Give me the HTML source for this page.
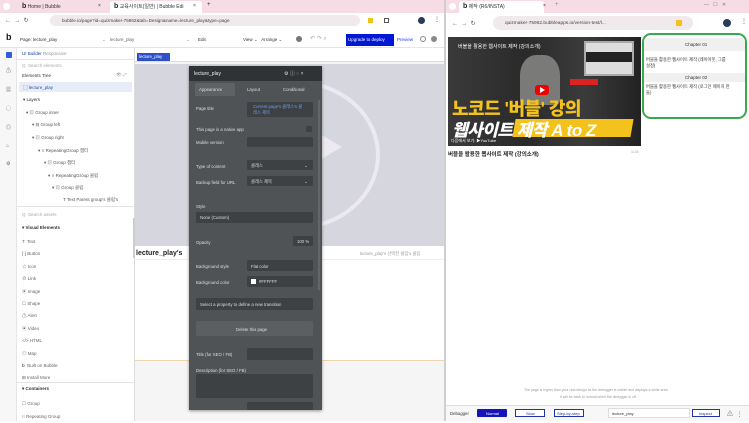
<!DOCTYPE html><html><head><meta charset="utf-8"><style>
*{box-sizing:border-box;margin:0;padding:0}
body{width:749px;height:421px;overflow:hidden;background:#fff;font-family:"Liberation Sans","Noto Sans CJK KR",sans-serif;font-size:4.5px;color:#333;position:relative}
.a{position:absolute}
.t{position:absolute;white-space:nowrap}
.tab{background:#f6dde5}
.pr{color:#ddd;font-size:4.3px}
.inp{position:absolute;background:#3e4144;border-radius:1px}
</style></head><body>
<!-- LEFT WINDOW -->
<div class="a tab" style="left:0;top:0;width:444px;height:13px"></div>
<div class="a" style="left:3px;top:3px;width:7px;height:7px;border-radius:50%;background:#fff"></div>
<div class="t" style="left:22px;top:3px;font-size:5px"><b style="font-size:7px;color:#222">b</b> Home | Bubble</div>
<div class="t" style="left:98px;top:3px;font-size:5px">×</div>
<div class="a" style="left:110px;top:1px;width:92px;height:12px;background:#fff;border-radius:3px 3px 0 0"></div>
<div class="t" style="left:114px;top:3px;font-size:5px"><b style="font-size:7px;color:#222">b</b> 교육사이트(일반) | Bubble Edi</div>
<div class="t" style="left:193px;top:3px;font-size:5px">×</div>
<div class="t" style="left:207px;top:2px;font-size:6px">+</div>
<div class="a" style="left:0;top:13px;width:444px;height:15px;background:#fff"></div>
<div class="t" style="left:5px;top:17px;font-size:6px;color:#555">←&nbsp;&nbsp;→&nbsp;&nbsp;↻</div>
<div class="a" style="left:50px;top:15px;width:310px;height:11px;background:#f1eaed;border-radius:6px"></div>
<div class="t" style="left:62px;top:18px;font-size:4.6px;color:#444">bubble.io/page?id=quizmaker-75962&amp;tab=Design&amp;name=lecture_play&amp;type=page</div>
<div class="a" style="left:368px;top:18px;width:5px;height:5px;background:#f2c21b"></div>
<div class="a" style="left:384px;top:18px;width:5px;height:5px;border:1px solid #555"></div>
<div class="a" style="left:418px;top:17px;width:7px;height:7px;border-radius:50%;background:#2b3b5a"></div>
<div class="t" style="left:434px;top:16px;font-size:6px">⋮</div>
<!-- bubble header -->
<div class="a" style="left:0;top:28px;width:444px;height:20px;background:#fff;border-bottom:1px solid #e4e4e4"></div>
<div class="t" style="left:6px;top:32px;font-size:9px;font-weight:bold;color:#111">b</div>
<div class="t" style="left:20px;top:37px">Page: lecture_play</div>
<div class="t" style="left:102px;top:37px;color:#888">⌄</div>
<div class="t" style="left:110px;top:37px;color:#666">lecture_play</div>
<div class="t" style="left:186px;top:37px;color:#888">⌄</div>
<div class="t" style="left:198px;top:37px">Edit</div>
<div class="t" style="left:243px;top:37px">View ⌄&nbsp;&nbsp; Arrange ⌄</div>
<div class="a" style="left:296px;top:36px;width:6px;height:6px;border-radius:50%;background:#777"></div>
<div class="t" style="left:310px;top:35px;font-size:6px;color:#aaa">↶ ↷ ⌕</div>
<div class="a" style="left:346px;top:34px;width:48px;height:12px;background:#0018d4"></div>
<div class="t" style="left:348px;top:37px;color:#fff">Upgrade to deploy</div>
<div class="t" style="left:397px;top:37px;color:#1a3ad4">Preview</div>
<div class="a" style="left:420px;top:36px;width:6px;height:6px;border-radius:50%;border:1px solid #888"></div>
<div class="a" style="left:431px;top:36px;width:6px;height:6px;border-radius:50%;background:#888"></div>
<!-- left rail -->
<div class="a" style="left:0;top:48px;width:17px;height:373px;background:#f7f7f7;border-right:1px solid #e5e5e5"></div>
<div class="a" style="left:6px;top:52px;width:6px;height:6px;background:#2d5fd8;border-radius:1px"></div>
<div class="t" style="left:6px;top:67px;font-size:5px;color:#666">⚠<br><br><br>▦<br><br><br>◯<br><br><br>◎<br><br><br>⌂<br><br><br>⚙</div>
<!-- left panel -->
<div class="a" style="left:17px;top:48px;width:118px;height:373px;background:#fff;border-right:1px solid #ddd"></div>
<div class="t" style="left:22px;top:51px;color:#2244aa">UI Builder <span style="color:#999">Responsive</span></div>
<div class="a" style="left:17px;top:59px;width:118px;height:1px;background:#e4e4e4"></div>
<div class="t" style="left:22px;top:63px;color:#aaa">Q&nbsp; Search elements</div>
<div class="t" style="left:22px;top:73px">Elements Tree</div>
<div class="t" style="left:116px;top:72px;color:#999">👁 ⤢</div>
<div class="a" style="left:19px;top:82px;width:113px;height:10px;background:#e6edf9"></div>
<div class="t" style="left:23px;top:85px;color:#2a4fae">▢ lecture_play</div>
<div class="t" style="left:23px;top:97px">▾ Layers</div>
<div class="t" style="left:26px;top:110px;color:#555">▾ ▥ Group inner</div>
<div class="t" style="left:32px;top:122px;color:#555">▾ ⊟ Group left</div>
<div class="t" style="left:32px;top:135px;color:#555">▾ ▥ Group right</div>
<div class="t" style="left:38px;top:148px;color:#555">▾ ⁝⁝ RepeatingGroup 챕터</div>
<div class="t" style="left:44px;top:160px;color:#555">▾ ▥ Group 챕터</div>
<div class="t" style="left:48px;top:173px;color:#555">▾ ⁝⁝ RepeatingGroup 클립</div>
<div class="t" style="left:52px;top:185px;color:#555">▾ ▥ Group 클립</div>
<div class="t" style="left:63px;top:197px;color:#555">T Text Parent group's 클립's</div>
<div class="a" style="left:17px;top:206px;width:118px;height:1px;background:#e4e4e4"></div>
<div class="t" style="left:22px;top:212px;color:#aaa">Q&nbsp; Search assets</div>
<div class="t" style="left:22px;top:225px;font-weight:bold">▾ Visual Elements</div>
<div class="t" style="left:22px;top:236px;color:#666;line-height:12.4px">T&nbsp; Text<br>[·] Button<br>☆ Icon<br>⊘ Link<br>▣ Image<br>☐ Shape<br>⚠ Alert<br>▣ Video<br>&lt;/&gt; HTML<br>◎ Map<br><b>b</b>&nbsp; Built on Bubble<br>⊞ Install More</div>
<div class="a" style="left:17px;top:382px;width:118px;height:1px;background:#e4e4e4"></div>
<div class="t" style="left:22px;top:386px;font-weight:bold">▾ Containers</div>
<div class="t" style="left:22px;top:398px;color:#666;line-height:12.5px">☐ Group<br>⁝⁝ Repeating Group</div>
<div class="a" style="left:133px;top:218px;width:2px;height:40px;background:#ccc"></div>
<!-- canvas -->
<div class="a" style="left:135px;top:48px;width:309px;height:373px;background:#f5f5f5"></div>
<div class="a" style="left:135px;top:48px;width:309px;height:14px;background:#fff;border-bottom:1px solid #f0d8b8"></div>
<div class="a" style="left:137px;top:53px;width:33px;height:8px;background:#2d4fc8"></div>
<div class="t" style="left:139px;top:54px;color:#fff;font-size:4.3px">lecture_play</div>
<div class="a" style="left:135px;top:64px;width:309px;height:182px;background:#d6d6de"></div>
<div class="a" style="left:210px;top:80px;width:170px;height:150px;border-radius:50%;border:4px solid #eceaf0"></div>
<div class="a" style="left:318px;top:133px;width:0;height:0;border-left:24px solid #eceaf0;border-top:14px solid transparent;border-bottom:14px solid transparent"></div>
<div class="a" style="left:135px;top:246px;width:309px;height:114px;background:#fff"></div>
<div class="t" style="left:136px;top:250px;font-size:7px;font-weight:bold;color:#222">lecture_play's</div>
<div class="t" style="left:360px;top:251px;color:#999;font-size:4.3px">lecture_play's 선택된 클립's 클립</div>
<div class="a" style="left:135px;top:259px;width:309px;height:1px;background:#eee"></div>
<div class="a" style="left:135px;top:360px;width:309px;height:1px;background:#f0d4b0"></div>
<!-- property panel -->
<div class="a" style="left:189px;top:66px;width:133px;height:344px;background:#505356;box-shadow:0 1px 3px rgba(0,0,0,.4)"></div>
<div class="a" style="left:189px;top:66px;width:133px;height:15px;background:#303336"></div>
<div class="t" style="left:194px;top:71px;color:#eee;font-size:5px">lecture_play</div>
<div class="t" style="left:284px;top:70px;color:#ddd;font-size:5px">⚙ ⓘ ◌ ×</div>
<div class="a" style="left:195px;top:83px;width:40px;height:13px;background:#5f6265;border-radius:2px 2px 0 0"></div>
<div class="t pr" style="left:199px;top:87px">Appearance</div>
<div class="t pr" style="left:247px;top:87px">Layout</div>
<div class="t pr" style="left:283px;top:87px">Conditional</div>
<div class="t pr" style="left:196px;top:106px">Page title</div>
<div class="inp" style="left:247px;top:102px;width:66px;height:15px"></div>
<div class="t" style="left:253px;top:104px;color:#6aa0ee;font-size:4.3px;line-height:6px">Current page's 클래스's 클<br>래스 제목</div>
<div class="t pr" style="left:196px;top:127px">This page is a native app</div>
<div class="inp" style="left:306px;top:126px;width:6px;height:6px"></div>
<div class="t pr" style="left:196px;top:140px">Mobile version</div>
<div class="inp" style="left:247px;top:137px;width:66px;height:10px"></div>
<div class="t pr" style="left:196px;top:164px">Type of content</div>
<div class="inp" style="left:247px;top:160px;width:66px;height:10px"></div>
<div class="t pr" style="left:251px;top:163px">클래스 <span style="margin-left:40px">⌄</span></div>
<div class="t pr" style="left:196px;top:180px">Backup field for URL</div>
<div class="inp" style="left:247px;top:176px;width:66px;height:10px"></div>
<div class="t pr" style="left:251px;top:179px">클래스 제목 <span style="margin-left:31px">⌄</span></div>
<div class="t pr" style="left:196px;top:204px">Style</div>
<div class="inp" style="left:196px;top:212px;width:117px;height:11px"></div>
<div class="t pr" style="left:200px;top:215px">None (Custom)</div>
<div class="t pr" style="left:196px;top:240px">Opacity</div>
<div class="inp" style="left:293px;top:236px;width:20px;height:10px"></div>
<div class="t pr" style="left:297px;top:239px">100 %</div>
<div class="t pr" style="left:196px;top:264px">Background style</div>
<div class="inp" style="left:247px;top:260px;width:66px;height:11px"></div>
<div class="t pr" style="left:251px;top:264px">Flat color</div>
<div class="t pr" style="left:196px;top:280px">Background color</div>
<div class="inp" style="left:247px;top:276px;width:66px;height:11px"></div>
<div class="a" style="left:251px;top:279px;width:5px;height:5px;background:#fff"></div>
<div class="t pr" style="left:259px;top:279px">#FFFFFF</div>
<div class="inp" style="left:196px;top:298px;width:117px;height:12px"></div>
<div class="t pr" style="left:200px;top:302px">Select a property to define a new transition</div>
<div class="a" style="left:196px;top:321px;width:117px;height:15px;background:#5c5f62;border-radius:2px"></div>
<div class="t pr" style="left:236px;top:327px">Delete this page</div>
<div class="t pr" style="left:196px;top:352px">Title (for SEO / FB)</div>
<div class="inp" style="left:247px;top:348px;width:66px;height:12px"></div>
<div class="t pr" style="left:196px;top:368px">Description (for SEO / FB)</div>
<div class="inp" style="left:196px;top:374px;width:117px;height:24px"></div>
<div class="inp" style="left:247px;top:402px;width:66px;height:8px"></div>
<div class="a" style="left:318px;top:100px;width:2px;height:190px;background:#666"></div>
<!-- divider -->
<div class="a" style="left:444px;top:0;width:2px;height:421px;background:#cfcfcf"></div>
<!-- RIGHT WINDOW -->
<div class="a tab" style="left:446px;top:0;width:303px;height:13px"></div>
<div class="a" style="left:449px;top:3px;width:7px;height:7px;border-radius:50%;background:#fff"></div>
<div class="a" style="left:459px;top:1px;width:85px;height:12px;background:#fff;border-radius:3px 3px 0 0"></div>
<div class="t" style="left:463px;top:3px;font-size:5px"><b style="font-size:7px;color:#222">b</b> 제작 (R6/INSTA)</div>
<div class="t" style="left:543px;top:3px;font-size:5px">×</div>
<div class="t" style="left:555px;top:2px;font-size:6px;color:#888">+</div>
<div class="t" style="left:704px;top:2px;font-size:5px;color:#777">—&nbsp;&nbsp;&nbsp;☐&nbsp;&nbsp;&nbsp;✕</div>
<div class="a" style="left:446px;top:13px;width:303px;height:20px;background:#fff"></div>
<div class="t" style="left:452px;top:20px;font-size:6px;color:#555">←&nbsp; →&nbsp; ↻</div>
<div class="a" style="left:493px;top:16px;width:200px;height:14px;background:#f1eaed;border-radius:7px"></div>
<div class="t" style="left:505px;top:21px;font-size:4.8px;color:#444">quizmaker-75962.bubbleapps.io/version-test/l...</div>
<div class="a" style="left:676px;top:20px;width:6px;height:6px;background:#f2c21b"></div>
<div class="a" style="left:723px;top:19px;width:8px;height:8px;border-radius:50%;background:#2b3b5a"></div>
<div class="t" style="left:741px;top:18px;font-size:6px">⋮</div>
<!-- video -->
<div class="a" style="left:448px;top:37px;width:193px;height:109px;background:linear-gradient(90deg,#3a3a3a,#2a2a2a 40%,#3b3b3b 70%,#222);overflow:hidden">
<div class="a" style="left:72px;top:18px;width:40px;height:50px;border-radius:40% 40% 10% 10%;background:#7a7a78"></div>
<div class="a" style="left:136px;top:4px;width:50px;height:35px;background:#ddd;border:2px solid #aaa"></div>
<div class="a" style="left:138px;top:15px;width:46px;height:10px;background:#222"></div>
<div class="t" style="left:10px;top:6px;color:#fff;font-size:5px">버블을 활용한 웹사이트 제작 (강의소개)</div>
<div class="a" style="left:87px;top:48px;width:14px;height:10px;background:#e00;border-radius:3px"></div>
<div class="a" style="left:92px;top:50px;border-left:5px solid #fff;border-top:3px solid transparent;border-bottom:3px solid transparent"></div>
<div class="a" style="left:122px;top:42px;width:28px;height:6px;background:#d22"></div>
<div class="a" style="left:66px;top:82px;width:118px;height:18px;background:#f4c21c;transform:skew(-10deg)"></div>
<div class="t" style="left:4px;top:58px;color:#f4c21c;font-size:18px;font-weight:900;letter-spacing:-.5px">노코드 '버블' 강의</div>
<div class="t" style="left:4px;top:79px;color:#fff;font-size:17px;font-weight:900;font-style:italic;letter-spacing:-.5px">웹사이트 제작 A to Z</div>
<div class="t" style="left:3px;top:101px;color:#fff;font-size:4px">다음에서 보기: ▶YouTube</div>
</div>
<div class="t" style="left:448px;top:150px;font-size:5.5px;font-weight:bold;color:#222">버블을 활용한 웹사이트 제작 (강의소개)</div>
<div class="t" style="left:631px;top:150px;font-size:3.5px;color:#aaa">1135</div>
<!-- chapters -->
<div class="a" style="left:642px;top:33px;width:105px;height:86px;border:2px solid #39a84e;border-radius:9px;background:#fff;overflow:hidden">
 <div class="a" style="left:0;top:3px;width:103px;height:13px;background:#f0f0f0"></div>
 <div class="t" style="left:41px;top:7px;font-size:4.5px;color:#333">Chapter 01</div>
 <div class="t" style="left:2px;top:22px;font-size:4.3px;line-height:6px;color:#333">버블을 활용한 웹사이트 제작 (레이아웃, 그룹<br>설정)</div>
 <div class="a" style="left:0;top:38px;width:103px;height:9px;background:#f0f0f0"></div>
 <div class="t" style="left:41px;top:40px;font-size:4.5px;color:#333">Chapter 02</div>
 <div class="t" style="left:2px;top:49px;font-size:4.3px;line-height:6px;color:#333">버블을 활용한 웹사이트 제작 (로그인 페이지 만<br>들)</div>
</div>
<!-- footer notes -->
<div class="t" style="left:524px;top:388px;font-size:3.5px;color:#999">The page is higher than your real design as the debugger is visible and displays a white area.</div>
<div class="t" style="left:560px;top:395px;font-size:3.5px;color:#999">It will be back to normal when the debugger is off.</div>
<!-- debugger -->
<div class="a" style="left:446px;top:405px;width:303px;height:16px;background:#f7f7f7;border-top:1px solid #ddd"></div>
<div class="t" style="left:450px;top:411px;font-size:4.3px">Debugger</div>
<div class="a" style="left:477px;top:409px;width:30px;height:8px;background:#1414b8;border-radius:1px"></div>
<div class="t" style="left:486px;top:411px;font-size:4px;color:#fff">Normal</div>
<div class="a" style="left:515px;top:409px;width:30px;height:8px;border:1px solid #2233aa;background:#fff"></div>
<div class="t" style="left:526px;top:411px;font-size:4px;color:#2233aa">Slow</div>
<div class="a" style="left:554px;top:409px;width:30px;height:8px;border:1px solid #2233aa;background:#fff"></div>
<div class="t" style="left:557px;top:411px;font-size:4px;color:#2233aa">Step-by-step</div>
<div class="a" style="left:608px;top:408px;width:82px;height:10px;border:1px solid #ddd;background:#fff"></div>
<div class="t" style="left:612px;top:411px;font-size:4px">lecture_play<span style="margin-left:60px">⌄</span></div>
<div class="a" style="left:692px;top:409px;width:28px;height:8px;border:1px solid #2233aa;background:#fff"></div>
<div class="t" style="left:699px;top:411px;font-size:4px;color:#2233aa">Inspect</div>
<div class="t" style="left:727px;top:409px;font-size:6px;color:#777">⚠&nbsp; ⋮</div>
</body></html>
